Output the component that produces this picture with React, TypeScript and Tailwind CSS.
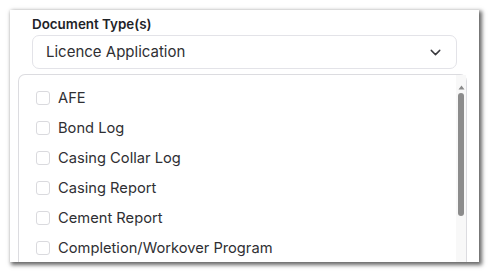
import { ChevronDown } from "lucide-react";

const docTypes = [
  "AFE",
  "Bond Log",
  "Casing Collar Log",
  "Casing Report",
  "Cement Report",
  "Completion/Workover Program",
];

function App() {
  return (
    <div className="w-[490px] h-[274px] bg-white p-[10px] font-['Inter','Noto_Sans',sans-serif]">
      <div className="w-[469px] h-[252px] bg-white shadow-[2px_2px_4px_1px_rgba(0,0,0,0.6)] overflow-hidden pt-[4px] pl-[8px] pr-[12px]">
        <div className="ml-[14px] mr-[10px]">
          <label className="block text-[13.4px] leading-[20px] font-semibold text-[#1f2328]">
            Document Type(s)
          </label>
          <div className="mt-[1px] h-[34px] flex items-center justify-between rounded-[7px] border border-[#e3e3e8] pl-[13px] pr-[12px]">
            <span className="text-[15px] text-[#2f2f33]">Licence Application</span>
            <ChevronDown size={17} strokeWidth={2} className="text-[#3a3a3e]" />
          </div>
        </div>
        <div className="mt-[5px] h-[200px] flex rounded-t-[7px] border border-b-0 border-[#dcdce0]">
          <ul className="flex-1 pt-[8px] pl-[17px]">
            {docTypes.map((t) => (
              <li key={t} className="h-[30px] flex items-center gap-[8px]">
                <span className="w-[14px] h-[14px] rounded-[3px] border border-[#dadade] bg-white" />
                <span className="text-[14.7px] text-[#2f2f33]">{t}</span>
              </li>
            ))}
          </ul>
          <div className="w-[10px] bg-[#f8f8f8] flex flex-col items-center pt-[10px]">
            <svg width="7" height="5" viewBox="0 0 7 5">
              <path d="M0.5 4.5 L3.5 0.5 L6.5 4.5 Z" fill="#8a8a8a" />
            </svg>
            <div className="mt-[3px] w-[6px] h-[123px] rounded-[3px] bg-[#8c8c8c]" />
          </div>
        </div>
      </div>
    </div>
  );
}

export default App;
